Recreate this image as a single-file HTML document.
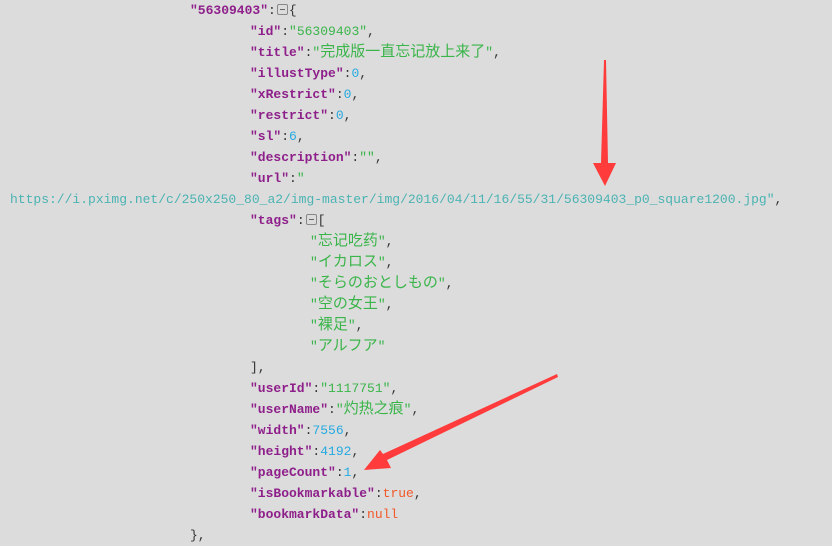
<!DOCTYPE html>
<html><head><meta charset="utf-8"><style>
body{margin:0;width:832px;height:546px;background:#dcdcdc;overflow:hidden;position:relative;font-family:"Liberation Mono","Noto Sans CJK SC",monospace;font-size:13px;color:#333;}
.l{position:absolute;white-space:pre;line-height:21px;height:21px;}
.k{color:#8e1f8a;font-weight:bold;}
.s{color:#3ab54a;}
.c{font-family:"Noto Sans CJK SC",sans-serif;font-size:15px;line-height:15px;}
.n{color:#25aae1;}
.u{color:#4bb3b3;}
.b{color:#f1592a;}
.t{display:inline-block;width:11px;height:11px;border:1px solid #888;border-radius:2px;box-sizing:border-box;vertical-align:-1px;position:relative;margin:0 1px;}
.t:after{content:"";position:absolute;left:2px;right:2px;top:4px;height:1px;background:#666;}
</style></head><body>
<div class="l" style="left:190px;top:0"><span class="k">"56309403"</span>:<span class="t"></span>{</div>
<div class="l" style="left:250px;top:21px"><span class="k">"id"</span>:<span class="s">"56309403"</span>,</div>
<div class="l" style="left:250px;top:42px"><span class="k">"title"</span>:<span class="s">"<span class="c">完成版一直忘记放上来了</span>"</span>,</div>
<div class="l" style="left:250px;top:63px"><span class="k">"illustType"</span>:<span class="n">0</span>,</div>
<div class="l" style="left:250px;top:84px"><span class="k">"xRestrict"</span>:<span class="n">0</span>,</div>
<div class="l" style="left:250px;top:105px"><span class="k">"restrict"</span>:<span class="n">0</span>,</div>
<div class="l" style="left:250px;top:126px"><span class="k">"sl"</span>:<span class="n">6</span>,</div>
<div class="l" style="left:250px;top:147px"><span class="k">"description"</span>:<span class="s">""</span>,</div>
<div class="l" style="left:250px;top:168px"><span class="k">"url"</span>:<span class="s">"</span></div>
<div class="l" style="left:10px;top:189px"><span class="u">https://i.pximg.net/c/250x250_80_a2/img-master/img/2016/04/11/16/55/31/56309403_p0_square1200.jpg"</span>,</div>
<div class="l" style="left:250px;top:210px"><span class="k">"tags"</span>:<span class="t"></span>[</div>
<div class="l" style="left:310px;top:231px"><span class="s">"<span class="c">忘记吃药</span>"</span>,</div>
<div class="l" style="left:310px;top:252px"><span class="s">"<span class="c">イカロス</span>"</span>,</div>
<div class="l" style="left:310px;top:273px"><span class="s">"<span class="c">そらのおとしもの</span>"</span>,</div>
<div class="l" style="left:310px;top:294px"><span class="s">"<span class="c">空の女王</span>"</span>,</div>
<div class="l" style="left:310px;top:315px"><span class="s">"<span class="c">裸足</span>"</span>,</div>
<div class="l" style="left:310px;top:336px"><span class="s">"<span class="c">アルフア</span>"</span></div>
<div class="l" style="left:250px;top:357px">],</div>
<div class="l" style="left:250px;top:378px"><span class="k">"userId"</span>:<span class="s">"1117751"</span>,</div>
<div class="l" style="left:250px;top:399px"><span class="k">"userName"</span>:<span class="s">"<span class="c">灼热之痕</span>"</span>,</div>
<div class="l" style="left:250px;top:420px"><span class="k">"width"</span>:<span class="n">7556</span>,</div>
<div class="l" style="left:250px;top:441px"><span class="k">"height"</span>:<span class="n">4192</span>,</div>
<div class="l" style="left:250px;top:462px"><span class="k">"pageCount"</span>:<span class="n">1</span>,</div>
<div class="l" style="left:250px;top:483px"><span class="k">"isBookmarkable"</span>:<span class="b">true</span>,</div>
<div class="l" style="left:250px;top:504px"><span class="k">"bookmarkData"</span>:<span class="b">null</span></div>
<div class="l" style="left:190px;top:525px">},</div>
<svg width="832" height="546" style="position:absolute;left:0;top:0">
<polygon points="604,60 606,60 608,163 616,163 605,186 593,163 601,163" fill="#ff3b3b"/>
<polygon points="557,374 558,377 387,460 391,468 364,470 380,450 383,454" fill="#ff3b3b"/>
</svg>
</body></html>
